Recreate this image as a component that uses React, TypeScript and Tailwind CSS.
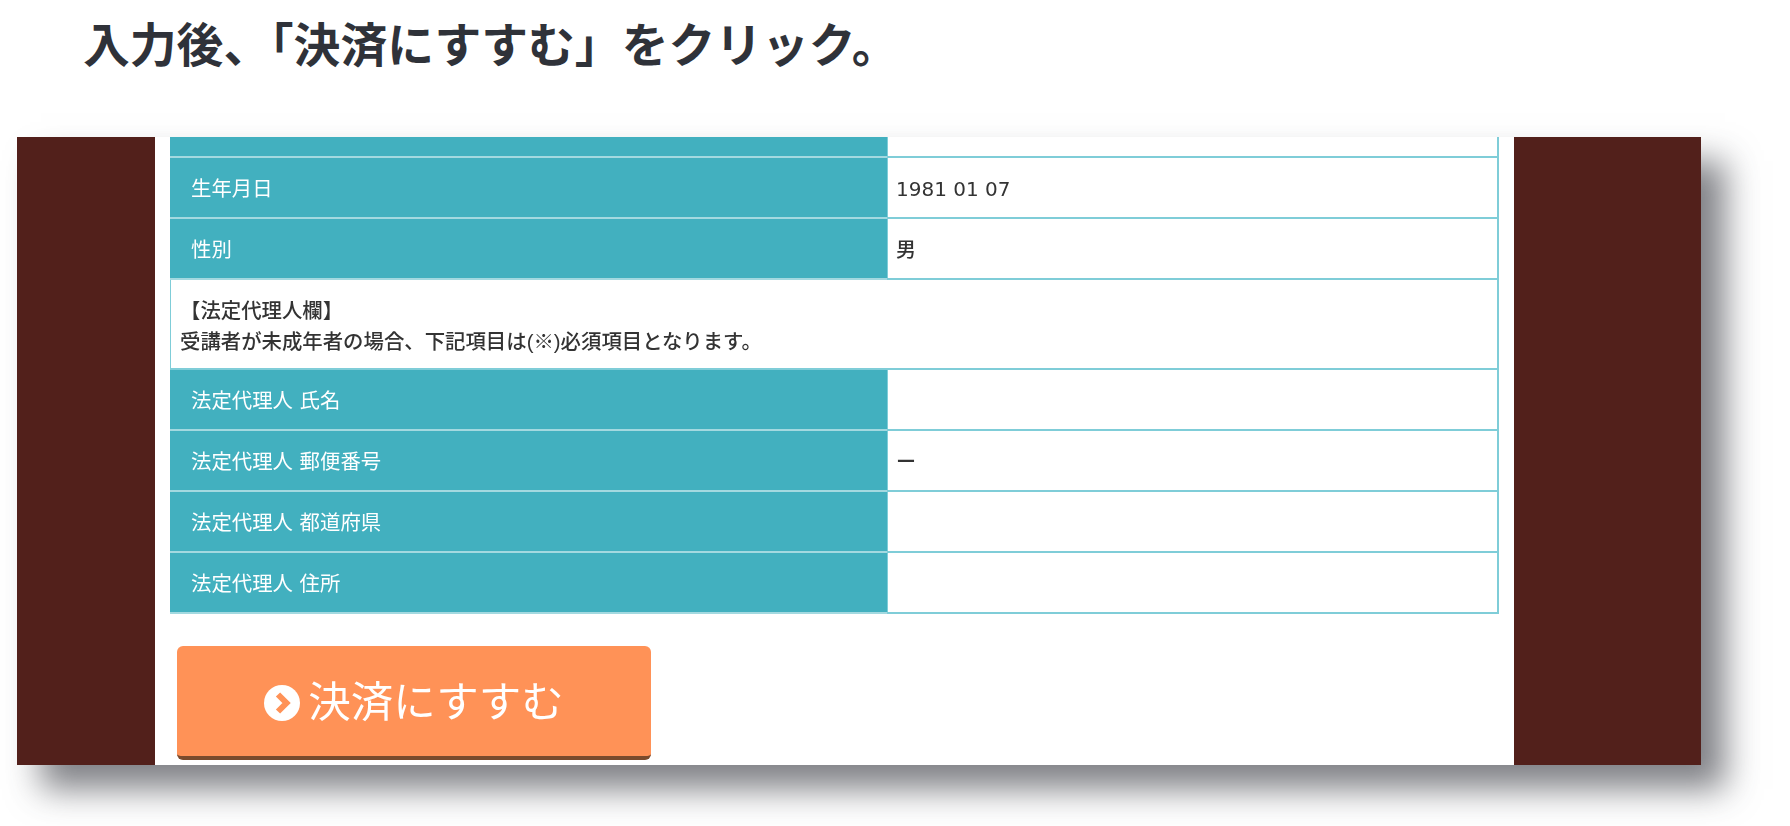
const jp = "font-['Liberation_Sans','Noto_Sans_CJK_JP',sans-serif]";

function LabelRow({ label, value, h = "h-[61px]", latin = false }: { label: string; value?: string; h?: string; latin?: boolean }) {
  return (
    <div className={`flex ${h}`}>
      <div className="w-[717px] shrink-0 bg-[#42b0bf] border-b-2 border-[#a3d9e0] flex items-center pl-[21px] pt-[4px] text-[20.4px] [word-spacing:1px] text-white">
        {label}
      </div>
      <div className={`flex-1 border-b-2 border-l border-r-2 border-[#7fcdd8] bg-white flex items-center pl-2 pt-[2px] text-[20px] font-medium text-[#333] ${latin ? "font-['DejaVu_Sans',sans-serif] font-normal" : ""}`}>
        {value}
      </div>
    </div>
  );
}

export default function App() {
  return (
    <div className={`${jp} w-[1790px] h-[826px] bg-white overflow-hidden`}>
      <h1 className="h-[137px] pl-[83px] pt-[16px] text-[46.8px] leading-[60px] font-bold text-[#2f3239]">
        入力後、「決済にすすむ」をクリック。
      </h1>

      {/* pasted screenshot of the form */}
      <div className="ml-[17px] w-[1684px] h-[628px] flex bg-white shadow-[24px_24px_32px_rgba(50,52,60,0.62)]">
        <div className="w-[138px] bg-[#52201b]" />
        <div className="w-[1359px] bg-white overflow-hidden">
          <div className="-mt-[20px] px-[15px] blur-[0.5px]">
            <LabelRow label="" h="h-[41px]" />
            <LabelRow label="生年月日" value="1981 01 07" latin />
            <LabelRow label="性別" value="男" />
            <div className="h-[90px] border-b-2 border-l border-r-2 border-[#7fcdd8] pl-[9px] pt-[16px] text-[20.4px] leading-[31px] font-medium text-[#333]">
              <p>【法定代理人欄】</p>
              <p>受講者が未成年者の場合、下記項目は(※)必須項目となります。</p>
            </div>
            <LabelRow label="法定代理人 氏名" />
            <LabelRow label="法定代理人 郵便番号" value="ー" />
            <LabelRow label="法定代理人 都道府県" />
            <LabelRow label="法定代理人 住所" />

            <button className="mt-[32px] ml-[7px] w-[474px] h-[114px] rounded-[6px] bg-[#ff9257] border-b-[4px] border-[#7a4a2c] flex items-center justify-center gap-[8px] pt-[3px] text-[42.5px] text-white">
              <svg viewBox="0 0 36 36" className="w-[36px] h-[36px]">
                <circle cx="18" cy="18" r="18" fill="#fff" />
                <path d="M14 9.5 L22.5 18 L14 26.5" fill="none" stroke="#ff9257" strokeWidth="6" />
              </svg>
              決済にすすむ
            </button>
          </div>
        </div>
        <div className="flex-1 bg-[#52201b]" />
      </div>
    </div>
  );
}
